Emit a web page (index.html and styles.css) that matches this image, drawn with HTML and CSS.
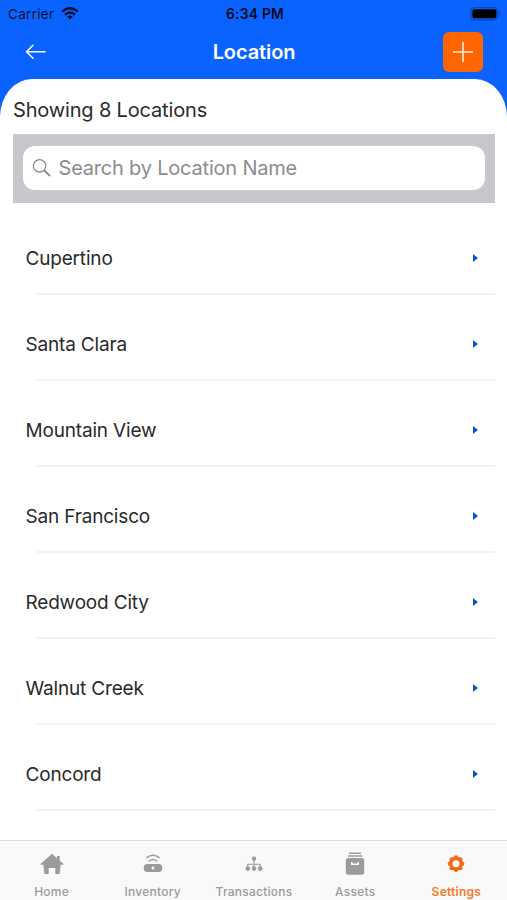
FILE: index.html
```html
<!DOCTYPE html>
<html lang="en">
<head>
<meta charset="utf-8">
<title>Location</title>
<link rel="stylesheet" href="styles.css">
</head>
<body>
<div class="app">
  <div class="status">
    <div class="carrier"><span>Carrier</span>
      <svg width="18" height="13" viewBox="0 0 18 13" fill="none" stroke="#03112e" stroke-width="2.5"><path d="M1.2 4.6Q9-2.2 16.8 4.6M4 7.7Q9 3.4 14 7.7"/><path d="M6.2 9.6Q9 7.4 11.8 9.6L9 12.5Z" fill="#03112e" stroke="none"/></svg>
    </div>
    <div class="time">6:34 PM</div>
    <svg class="battery" width="32" height="14" viewBox="0 0 32 14"><rect x=".8" y=".7" width="27" height="12.2" rx="3.5" fill="none" stroke="#063fae"/><rect x="2.4" y="2.3" width="24" height="9" rx="1.8" fill="#000"/><path d="M29.5 5Q31.5 6.8 29.5 9Z" fill="#063fae"/></svg>
  </div>
  <header class="nav">
    <svg class="back" width="22" height="18" viewBox="0 0 22 18" fill="none" stroke="#fff" stroke-width="1.5" stroke-linecap="round" stroke-linejoin="round"><path d="M8 2.3 1.5 8.8 8 15.3M1.5 8.8H20"/></svg>
    <h1>Location</h1>
    <button class="add" aria-label="Add"><svg width="40" height="40" viewBox="0 0 40 40" stroke="#ffece0" stroke-width="1.6" stroke-linecap="round"><path d="M20 10.5v19M10.5 20h19"/></svg></button>
  </header>
  <main class="panel">
    <h2>Showing 8 Locations</h2>
    <div class="searchbar"><div class="field">
      <svg width="20" height="20" viewBox="0 0 20 20" fill="none" stroke="#8a8a8d" stroke-linecap="round"><circle cx="7.6" cy="7.8" r="6.2" stroke-width="1.3"/><path d="m12.3 12.5 5.3 5" stroke-width="1.8"/></svg>
      <span>Search by Location Name</span>
    </div></div>
    <ul class="list">
      <li><span>Cupertino</span><i></i></li>
      <li><span>Santa Clara</span><i></i></li>
      <li><span>Mountain View</span><i></i></li>
      <li><span>San Francisco</span><i></i></li>
      <li><span>Redwood City</span><i></i></li>
      <li><span>Walnut Creek</span><i></i></li>
      <li><span>Concord</span><i></i></li>
    </ul>
  </main>
  <footer class="tabs">
    <div class="tab"><svg width="26" height="26" viewBox="0 0 26 26" fill="#9b9b9b"><path d="M13 2.7 18 7.2V5h2.7v4.6l3.8 3.4q.3.8-.5.8h-2.4l-.9 8.4q-.1.7-.8.7h-3.2q-.4 0-.4-.6v-5.2h-6.6v5.2q0 .6-.4.6H6.1q-.7 0-.8-.7l-.9-8.4H2q-.8 0-.5-.8Z"/></svg><span>Home</span></div>
    <div class="tab"><svg width="26" height="26" viewBox="0 0 26 26" fill="none" stroke="#9b9b9b" stroke-width="1.5" stroke-linecap="round"><path d="M6.8 6.6Q13 1.8 19.2 6.6M9.3 10Q13 7 16.7 10"/><rect x="3.8" y="13" width="18.4" height="8" rx="3.4" fill="#9b9b9b" stroke="none"/><circle cx="13" cy="17" r="1.5" fill="#fff" stroke="none"/></svg><span>Inventory</span></div>
    <div class="tab"><svg width="26" height="26" viewBox="0 0 26 26" fill="#9b9b9b"><path d="M13 8v10M6.8 18v-4.8h12.4V18" fill="none" stroke="#9b9b9b" stroke-width="1.1"/><circle cx="13" cy="7.8" r="2.2"/><circle cx="6.8" cy="17.6" r="2.3"/><circle cx="13" cy="17.6" r="2.3"/><circle cx="19.2" cy="17.6" r="2.3"/></svg><span>Transactions</span></div>
    <div class="tab"><svg width="26" height="26" viewBox="0 0 26 26" fill="#9b9b9b"><path d="M7 1.4h12v1.5H7zM5.8 4.2h14.4v1.6H5.8z"/><rect x="3.8" y="7.1" width="18.4" height="16.6" rx="2.5"/><path d="M9.8 11v2.2h6.4V11" fill="none" stroke="#fff" stroke-width="1.5"/></svg><span>Assets</span></div>
    <div class="tab active"><svg width="26" height="26" viewBox="0 0 26 26" fill="#f26a11"><circle cx="13" cy="12.7" r="5.3" fill="none" stroke="#f26a11" stroke-width="3.6"/><circle cx="13" cy="6.2" r="1.9"/><circle cx="17.6" cy="8.1" r="1.9"/><circle cx="19.5" cy="12.7" r="1.9"/><circle cx="17.6" cy="17.3" r="1.9"/><circle cx="13" cy="19.2" r="1.9"/><circle cx="8.4" cy="17.3" r="1.9"/><circle cx="6.5" cy="12.7" r="1.9"/><circle cx="8.4" cy="8.1" r="1.9"/></svg><span>Settings</span></div>
  </footer>
</div>
</body>
</html>
```
FILE: styles.css
```css
* { box-sizing: border-box; }
body { margin: 0; font-family: Inter, "Liberation Sans", sans-serif; }
svg { display: block; flex: none; }
.app { width: 507px; height: 900px; display: flex; flex-direction: column; overflow: hidden; background: linear-gradient(#0a62ff 160px, #fff 160px); }
.status { height: 27px; display: grid; grid-template-columns: 1fr auto 1fr; align-items: center; padding: 0 5px 0 8px; color: #03112e; }
.carrier { display: flex; align-items: center; gap: 7px; font-size: 13.5px; letter-spacing: .3px; }
.time { font-size: 13.8px; font-weight: 600; letter-spacing: .25px; color: #020b20; }
.battery { justify-self: end; }
.nav { height: 52px; display: grid; grid-template-columns: 1fr auto 1fr; align-items: center; padding: 0 24px 2px 25px; }
.nav h1 { margin: 0; font-size: 20px; font-weight: 600; letter-spacing: -.1px; color: #fff; }
.add { justify-self: end; width: 40px; height: 40px; padding: 0; border: 0; border-radius: 6px; background: #ff6500; }
.panel { flex: 1; background: #fff; border-radius: 32px 32px 0 0 / 38px 38px 0 0; padding: 17px 12px 0 13px; }
.panel h2 { margin: 0; height: 38px; line-height: 28px; font-size: 20px; font-weight: 400; letter-spacing: -.16px; color: #2b2b2d; white-space: nowrap; }
.searchbar { height: 69px; padding: 12px 10px 12px 10px; background: #c8c8cc; }
.field { height: 44px; display: flex; align-items: center; gap: 7px; padding-left: 8.5px; border-radius: 12px; background: #fff; font-size: 20px; letter-spacing: -.2px; color: #8c8c8f; white-space: nowrap; }
.list { margin: 6px 0 0; padding: 0; list-style: none; }
.list li { height: 86px; display: flex; align-items: center; justify-content: space-between; padding: 12px 17px 0 12.5px; font-size: 19px; letter-spacing: -.18px; color: #2a2a2c; background: linear-gradient(#f2f2f3, #f2f2f3) 24px 84px / 100% 2px no-repeat; }
.list i { width: 5px; height: 8px; background: #0d55cc; clip-path: polygon(0 0, 100% 50%, 0 100%); }
.tabs { height: 60px; flex: none; display: grid; grid-template-columns: repeat(5, 1fr); padding: 0 0 0 1px; border-top: 1px solid #dcdcdd; background: #f9f9f9; }
.tab { display: flex; flex-direction: column; align-items: center; padding-top: 10px; font-size: 12px; font-weight: 500; letter-spacing: .25px; line-height: 16px; color: #9b9b9b; }
.tab span { margin-top: 7px; }
.active { color: #f27a2c; font-weight: 600; }
```
